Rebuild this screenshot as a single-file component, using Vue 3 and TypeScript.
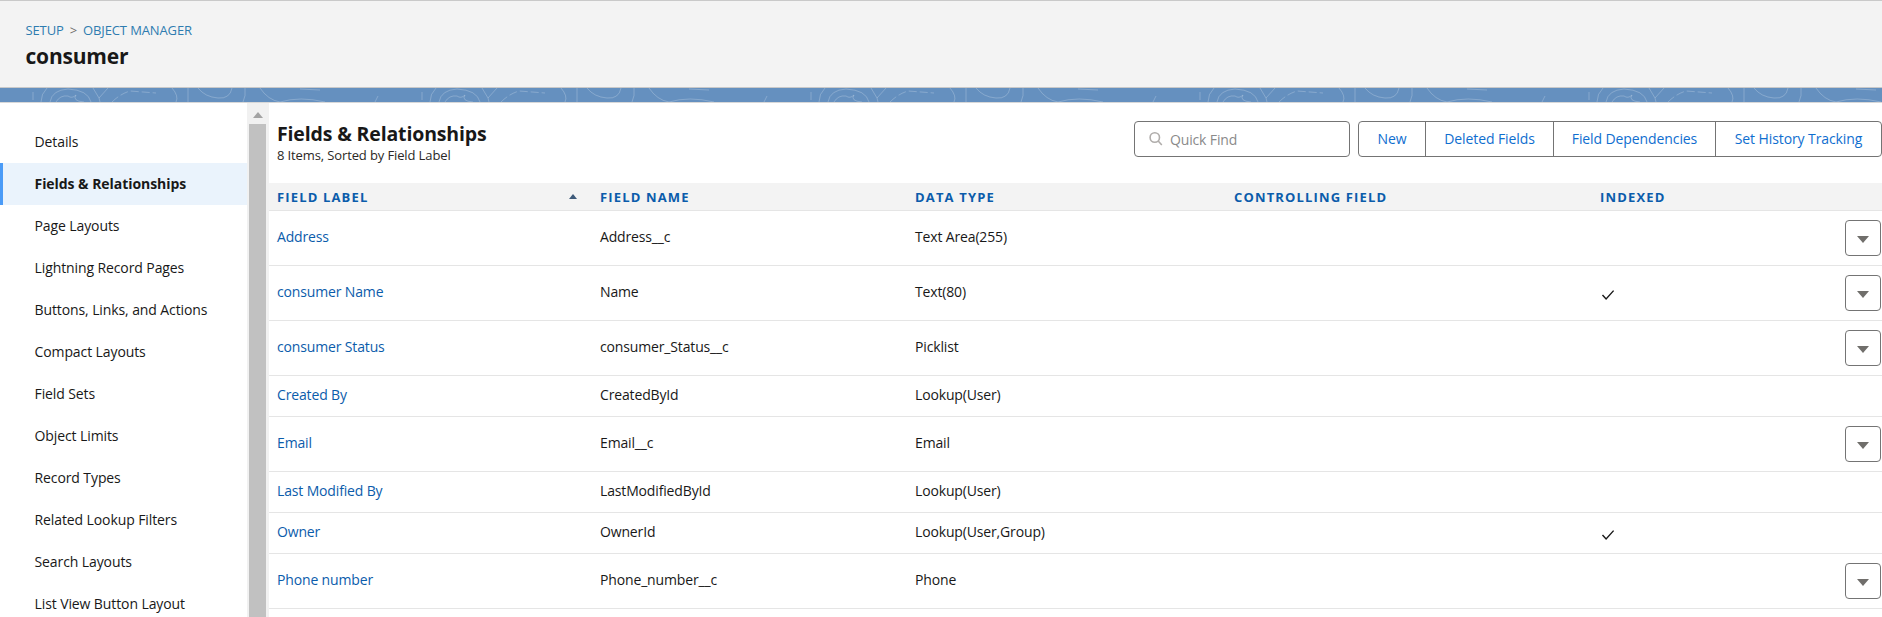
<script setup lang="ts">
interface Row { label: string; name: string; type: string; indexed?: boolean; menu?: boolean; tall: boolean }
const nav: string[] = ['Details','Fields & Relationships','Page Layouts','Lightning Record Pages','Buttons, Links, and Actions','Compact Layouts','Field Sets','Object Limits','Record Types','Related Lookup Filters','Search Layouts','List View Button Layout']
const rows: Row[] = [
  { label: 'Address', name: 'Address__c', type: 'Text Area(255)', menu: true, tall: true },
  { label: 'consumer Name', name: 'Name', type: 'Text(80)', indexed: true, menu: true, tall: true },
  { label: 'consumer Status', name: 'consumer_Status__c', type: 'Picklist', menu: true, tall: true },
  { label: 'Created By', name: 'CreatedById', type: 'Lookup(User)', tall: false },
  { label: 'Email', name: 'Email__c', type: 'Email', menu: true, tall: true },
  { label: 'Last Modified By', name: 'LastModifiedById', type: 'Lookup(User)', tall: false },
  { label: 'Owner', name: 'OwnerId', type: 'Lookup(User,Group)', indexed: true, tall: false },
  { label: 'Phone number', name: 'Phone_number__c', type: 'Phone', menu: true, tall: true },
]
const actions: string[] = ['New','Deleted Fields','Field Dependencies','Set History Tracking']
</script>

<template>
  <div class="page">
    <header class="head">
      <div class="crumbs"><a>SETUP</a><span class="sep">&gt;</span><a>OBJECT MANAGER</a></div>
      <h1>consumer</h1>
    </header>
    <svg class="band" width="1882" height="14" aria-hidden="true">
      <defs>
        <pattern id="swirl" x="0" y="0" width="389" height="14" patternUnits="userSpaceOnUse">
          <g fill="none" stroke="#fff" stroke-opacity="0.22" stroke-width="1">
            <path d="M33 4V12"/>
            <path d="M41 14Q41 6 47 0"/>
            <path d="M50 14Q52 2 68 1Q88 2 91 14"/>
            <path d="M56 14Q60 7 68 8Q72 11 76 7Q72 13 84 14"/>
            <path d="M93 0L99 10L108 0M99 10L100 14"/>
            <path d="M112 14Q120 6 130 3L156 5" stroke-dasharray="8 3"/>
            <path d="M172 0Q179 8 176 14"/>
            <path d="M188 0V14"/>
            <path d="M198 0Q205 9 218 10Q230 11 232 0"/>
            <path d="M245 0Q246 8 243 14"/>
            <path d="M260 0Q268 12 280 14"/>
            <path d="M280 14Q300 8 325 14"/>
            <path d="M300 1L320 2"/>
            <path d="M378 8L375 14"/>
          </g>
        </pattern>
      </defs>
      <rect width="1882" height="14" fill="#6590bf"/>
      <rect width="1882" height="14" fill="url(#swirl)"/>
    </svg>
    <div class="body">
      <aside class="side">
        <ul>
          <li v-for="(n, i) in nav" :key="n" :class="{ active: i === 1 }">{{ n }}</li>
        </ul>
      </aside>
      <div class="scroll">
        <div class="up"></div>
        <div class="thumb"></div>
      </div>
      <main class="main">
        <div class="top">
          <div class="titles">
            <h2>Fields &amp; Relationships</h2>
            <p>8 Items, Sorted by Field Label</p>
          </div>
          <div class="search">
            <svg width="16" height="16" viewBox="0 0 16 16" fill="none" stroke="#b0adab" stroke-width="1.6"><circle cx="6.8" cy="6.5" r="4.7"/><path d="M10.2 10l3.6 4"/></svg>
            <span>Quick Find</span>
          </div>
          <div class="btns">
            <a v-for="a in actions" :key="a">{{ a }}</a>
          </div>
        </div>
        <div class="row th">
          <div class="label-h">FIELD LABEL<i class="sort"></i></div>
          <div>FIELD NAME</div>
          <div>DATA TYPE</div>
          <div>CONTROLLING FIELD</div>
          <div>INDEXED</div>
          <div></div>
        </div>
        <div v-for="r in rows" :key="r.label" class="row td" :class="{ tall: r.tall }">
          <a class="txt">{{ r.label }}</a>
          <div class="txt">{{ r.name }}</div>
          <div class="txt">{{ r.type }}</div>
          <div></div>
          <div class="chk">
            <svg v-if="r.indexed" width="14" height="12" viewBox="0 0 14 12" fill="none" stroke="#181818" stroke-width="1.4"><path d="M1.5 6l3.6 4L12.6 1.6"/></svg>
          </div>
          <div class="act">
            <button v-if="r.menu" type="button" aria-label="Show actions"><i></i></button>
          </div>
        </div>
      </main>
    </div>
  </div>
</template>

<style scoped>
.page { width: 1882px; height: 617px; overflow: hidden; background: #fff; font-family: "Open Sans", "Noto Sans", sans-serif; color: #181818; }
.head { height: 88px; box-sizing: border-box; background: #f3f3f3; border-top: 1px solid #c9c9c9; border-bottom: 1px solid #c9c9c9; padding: 20px 25.5px 0; }
.crumbs { font-size: 13px; line-height: 18px; color: #2e7cb0; display: flex; gap: 6px; letter-spacing: -0.12px; }
.sep { color: #706e6b; }
h1 { margin: 4px 0 0; font-size: 21px; line-height: 26px; font-weight: 700; letter-spacing: -0.2px; }
.band { display: block; }
.body { display: flex; height: 515px; border-top: 1px solid #d8d8d8; box-sizing: border-box; }
.side { width: 247px; flex: none; padding-top: 18px; box-sizing: border-box; }
ul { margin: 0; padding: 0; list-style: none; }
li { height: 42px; line-height: 41px; padding-left: 34.5px; font-size: 14px; letter-spacing: -0.1px; }
li.active { background: #eaf3fc; font-weight: 700; box-shadow: inset 3px 0 0 #4a9bf7; letter-spacing: -0.05px; }
.scroll { width: 22px; flex: none; background: #f1f1f1; box-sizing: border-box; padding-left: 2px; }
.up { height: 21px; position: relative; }
.up::after { content: ""; position: absolute; left: 4px; top: 9px; border: 5px solid transparent; border-top: 0; border-bottom: 6px solid #a3a3a3; }
.thumb { width: 17px; height: 500px; background: #c1c1c1; }
.main { flex: 1; min-width: 0; }
.top { height: 80px; display: flex; align-items: flex-start; box-sizing: border-box; padding: 18px 0 0 8px; }
.titles { flex: 1; }
h2 { margin: 0; font-size: 19.5px; line-height: 26px; font-weight: 700; letter-spacing: -0.15px; }
p { margin: 0; font-size: 13px; line-height: 17px; color: #2b2826; letter-spacing: -0.12px; }
.search { width: 216px; height: 36px; box-sizing: border-box; border: 1px solid #747474; border-radius: 4px; display: flex; align-items: center; gap: 6px; padding-left: 13px; font-size: 14px; color: #8a8a8a; letter-spacing: -0.15px; }
.btns { width: 524px; height: 36px; margin-left: 8px; box-sizing: border-box; border: 1px solid #747474; border-radius: 4px; display: grid; grid-template-columns: 66px 128px 162px 1fr; font-size: 14px; color: #0f6ecf; letter-spacing: -0.1px; }
.btns a { display: flex; align-items: center; justify-content: center; border-left: 1px solid #747474; padding-bottom: 2px; }
.btns a:first-child { border-left: 0; }
.row { display: grid; grid-template-columns: 323px 315px 319px 366px 1fr 45px; padding-left: 8px; align-items: center; box-sizing: border-box; }
.th { height: 28px; background: #f3f3f3; border-bottom: 1px solid #e5e5e5; font-size: 13px; font-weight: 700; color: #0b5cab; letter-spacing: 1.15px; }
.label-h { position: relative; }
.sort { position: absolute; right: 23px; top: 6px; border: 4px solid transparent; border-top: 0; border-bottom: 5px solid #3e5a7a; }
.td { height: 41px; border-bottom: 1px solid #e5e5e5; font-size: 14px; letter-spacing: -0.15px; }
.td.tall { height: 55px; }
.txt { padding-bottom: 3px; }
.td a { color: #0b5cab; }
.chk { display: flex; margin-top: 4px; padding-left: 1px; }
.act { display: flex; justify-content: flex-end; padding-right: 1px; }
button { width: 36px; height: 36px; padding: 0; background: #fff; border: 1px solid #747474; border-radius: 4px; display: flex; align-items: center; justify-content: center; }
button i { margin-top: 2px; border: 6px solid transparent; border-bottom: 0; border-top: 7px solid #706e6b; }
</style>

<style>
body { margin: 0; }
</style>
